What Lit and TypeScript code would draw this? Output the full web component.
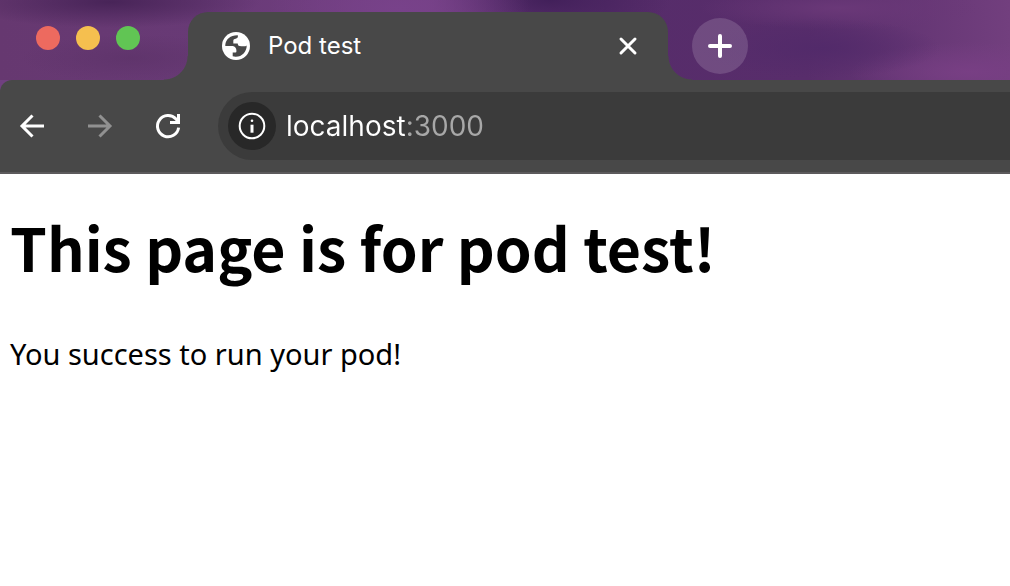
import { LitElement, html, css, svg } from "lit";
import { customElement, property } from "lit/decorators.js";

const icons = {
  globe: svg`<circle cx="14" cy="14" r="14" fill="#fff"/><path fill="#484848" d="M3.3 12.7C3.9 7.2 8.6 3.1 15.8 3.3C16.2 5 15.6 6.2 14.2 6.6C12.3 7.1 11.2 7.5 11.3 9V11.6H15.7C16 13 16.2 13.9 17.5 14C19.5 14.1 22.8 15 24.7 13.4C24.8 19.6 20 24.8 13.6 24.7C12.6 24.7 11.6 24.5 10.7 24.2V20.5H13.5C14.1 20.5 14.4 20.1 14.4 19.5V18.2C14.4 16.3 12.9 14.2 10.8 14H3.3Z"/>`,
  close: svg`<path d="M7 7L21 21M21 7L7 21"/>`,
  plus: svg`<path d="M14 4V24M4 14H24"/>`,
  back: svg`<path d="M26 14H4M14.5 3.5L4 14L14.5 24.5"/>`,
  forward: svg`<path d="M2 14H24M13.5 3.5L24 14L13.5 24.5"/>`,
  reload: svg`<path d="M24.6 15.6A10.6 10.6 0 1 1 22 7.1L24 9.4"/><path d="M24.5 2V10.5H16"/>`,
  info: svg`<circle cx="14" cy="14" r="12.3" stroke-width="2"/><path d="M14 12.7V20.7"/><circle cx="14" cy="8.7" r="1.3" fill="currentColor" stroke="none"/>`,
};

@customElement("chrome-icon")
class ChromeIcon extends LitElement {
  @property() name: keyof typeof icons = "globe";

  static styles = css`
    :host { display: block; width: 28px; height: 28px; }
    .glyph { display: block; width: 28px; height: 28px; }
  `;

  render() {
    return html`<svg class="glyph" viewBox="0 0 28 28" fill="none" stroke="currentColor"
      stroke-width=${this.name === "globe" ? 0 : this.name === "plus" ? 4 : 3}
      stroke-linecap=${this.name === "plus" || this.name === "close" ? "round" : "butt"}
      aria-hidden="true">${icons[this.name]}</svg>`;
  }
}

@customElement("tab-strip")
class TabStrip extends LitElement {
  static styles = css`
    :host {
      display: flex;
      align-items: flex-end;
      height: 80px;
      font-family: Inter, "Liberation Sans", sans-serif;
      color: #fff;
      background:
        radial-gradient(ellipse 150px 26px at 110px 2px, #482458, transparent),
        radial-gradient(ellipse 110px 24px at 130px 58px, #5c3268b0, transparent),
        radial-gradient(ellipse 130px 50px at 400px 8px, #78428a, transparent),
        radial-gradient(ellipse 120px 40px at 550px 0, #42205a, transparent),
        radial-gradient(ellipse 120px 30px at 820px 48px, #522a6a, transparent),
        radial-gradient(ellipse 140px 22px at 840px 8px, #6a3878, transparent),
        radial-gradient(ellipse 120px 30px at 970px 72px, #783f84, transparent),
        linear-gradient(90deg, #663870 0, #683a76 20%, #744084 42%, #562c6a 60%, #582d6b 80%, #723f7e 100%);
    }
    button {
      display: grid;
      place-items: center;
      padding: 0;
      border: 0;
      background: none;
      color: inherit;
      border-radius: 50%;
    }
    .lights {
      display: flex;
      gap: 16px;
      align-self: flex-start;
      padding: 26px 48px 0 36px;
    }
    .light { width: 24px; height: 24px; }
    .red { background: #ed6a5f; }
    .yellow { background: #f5bf4f; }
    .green { background: #61c554; }
    .tab {
      position: relative;
      display: flex;
      align-items: center;
      box-sizing: border-box;
      flex: 0 1 480px;
      min-width: 0;
      height: 68px;
      padding: 0 26px 0 34px;
      background: #484848;
      border-radius: 20px 20px 0 0;
    }
    .tab::before,
    .tab::after {
      content: "";
      position: absolute;
      bottom: 0;
      width: 24px;
      height: 24px;
    }
    .tab::before {
      right: 100%;
      background: radial-gradient(circle at 0 0, transparent 23px, #484848 24px);
    }
    .tab::after {
      left: 100%;
      background: radial-gradient(circle at 100% 0, transparent 23px, #484848 24px);
    }
    .title {
      flex: 1;
      padding-left: 18px;
      font-size: 24px;
      line-height: 32px;
      white-space: nowrap;
    }
    .new {
      width: 56px;
      height: 56px;
      margin: 0 0 6px 24px;
      background: #ffffff26;
    }
  `;

  render() {
    return html`
      <div class="lights">
        <button class="light red" aria-label="Close window"></button>
        <button class="light yellow" aria-label="Minimize"></button>
        <button class="light green" aria-label="Zoom"></button>
      </div>
      <div class="tab">
        <chrome-icon name="globe"></chrome-icon>
        <span class="title">Pod test</span>
        <button aria-label="Close tab"><chrome-icon name="close"></chrome-icon></button>
      </div>
      <button class="new" aria-label="New tab"><chrome-icon name="plus"></chrome-icon></button>
    `;
  }
}

@customElement("tool-bar")
class ToolBar extends LitElement {
  static styles = css`
    :host {
      display: block;
      background: #704080;
      color: #fff;
      font-family: Inter, "Liberation Sans", sans-serif;
    }
    .bar {
      display: flex;
      align-items: center;
      gap: 40px;
      padding: 12px 0 12px 18px;
      background: #484848;
      border-bottom: 2px solid #5c5a5c;
      border-radius: 12px 0 0 0;
    }
    button {
      display: grid;
      place-items: center;
      padding: 0;
      border: 0;
      background: none;
      color: inherit;
    }
    button:disabled { color: #919191; }
    .omnibox {
      display: flex;
      align-items: center;
      flex: 1;
      min-width: 0;
      height: 68px;
      margin-left: -4px;
      padding-left: 10px;
      background: #3b3b3b;
      border-radius: 34px 0 0 34px;
    }
    .site {
      flex: none;
      width: 48px;
      height: 48px;
      border-radius: 50%;
      background: #282828;
    }
    .url {
      flex: 1;
      min-width: 0;
      height: 40px;
      padding: 0 0 0 10px;
      border: 0;
      outline: 0;
      font: 28px/40px Inter, "Liberation Sans", sans-serif;
      color: transparent;
      background: linear-gradient(90deg, #fff 130px, #a8a8a8 130px);
      -webkit-background-clip: text;
      background-clip: text;
    }
  `;

  render() {
    return html`
      <div class="bar">
        <button aria-label="Back"><chrome-icon name="back"></chrome-icon></button>
        <button aria-label="Forward" disabled><chrome-icon name="forward"></chrome-icon></button>
        <button aria-label="Reload"><chrome-icon name="reload"></chrome-icon></button>
        <div class="omnibox">
          <button class="site" aria-label="Site information"><chrome-icon name="info"></chrome-icon></button>
          <input class="url" type="text" aria-label="Address" value="localhost:3000" spellcheck="false" />
        </div>
      </div>
    `;
  }
}

@customElement("app-root")
class AppRoot extends LitElement {
  static styles = css`
    :host {
      display: block;
      min-height: 100vh;
      background: #fff;
      color: #000;
      font-family: "Noto Sans CJK KR", "Noto Sans", sans-serif;
    }
    .page { padding: 28px 10px; }
    .heading {
      margin: 0;
      font-size: 59px;
      line-height: 90px;
      font-weight: 700;
    }
    .text {
      margin: 38px 0 0;
      font-family: "Noto Sans", sans-serif;
      font-size: 29px;
      line-height: 48px;
    }
  `;

  render() {
    return html`
      <tab-strip></tab-strip>
      <tool-bar></tool-bar>
      <main class="page">
        <h1 class="heading">This page is for pod test!</h1>
        <p class="text">You success to run your pod!</p>
      </main>
    `;
  }
}
